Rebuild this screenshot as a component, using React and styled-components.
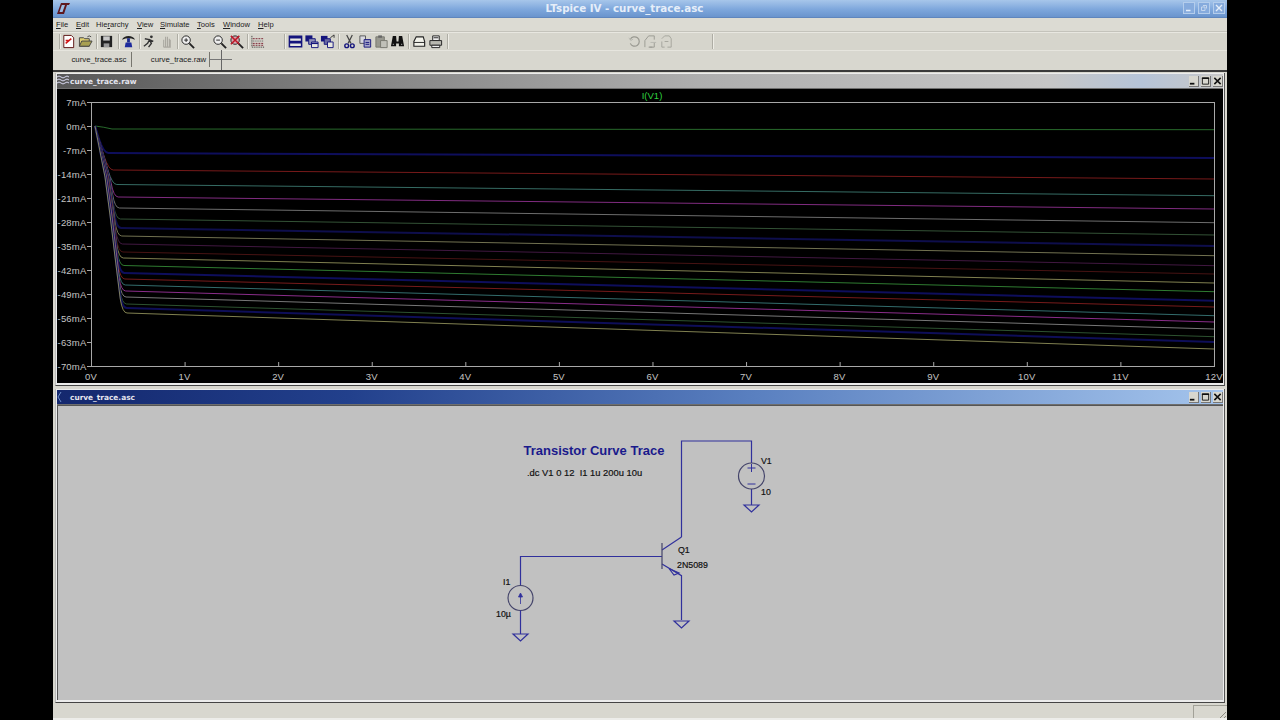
import React from "react";
import styled, { createGlobalStyle } from "styled-components";

const GlobalStyle = createGlobalStyle`
  html, body {
    margin: 0;
    background: #000;
    overflow: hidden;
  }
  * { box-sizing: border-box; }
`;

const UI_FONT = `"Liberation Sans", Arial, sans-serif`;

// [y at the knee of the curve, y at 12V, colour]
const TRACES = [
  [129, 129.7, "#2f7d34"],
  [153, 158, "#0e0e5c"],
  [170, 179, "#8c1f1f"],
  [184.5, 195.7, "#3f7f76"],
  [197, 209, "#973497"],
  [208, 222.7, "#808080"],
  [219, 235, "#3c6040"],
  [228, 246, "#0e0e4c"],
  [236, 255.7, "#85855e"],
  [244, 265.7, "#4c1c4c"],
  [252, 274, "#541616"],
  [258, 283, "#96965e"],
  [265.5, 291.7, "#37903a"],
  [273, 300.7, "#0e0e5c"],
  [279, 307, "#8c2020"],
  [285, 315.7, "#3c8080"],
  [291, 322, "#a235a2"],
  [297, 329, "#8c8c8c"],
  [304, 336.7, "#356038"],
  [308, 342, "#0e0e58"],
  [313, 349, "#97975e"],
];

const RAMP = [
  [126, 95],
  [177, 105],
  [215, 110],
  [265, 116],
  [313, 122],
];

const rampX = (y, i) => {
  const spread = (20 - i) * 0.35 * Math.min(1, Math.max(0, (y - 126) / 60));
  for (let n = 1; n < RAMP.length; n++) {
    const [y0, x0] = RAMP[n - 1];
    const [y1, x1] = RAMP[n];
    if (y <= y1) return x0 + ((y - y0) / (y1 - y0)) * (x1 - x0) + spread;
  }
  return 122 + spread;
};

const tracePath = ([knee, end], i) => {
  if (knee < 135) return `M95 126 Q104 127 112 ${knee} L1214 ${end}`;
  const bend = knee - 14;
  const ramp = RAMP.filter(([y]) => y < bend).map(([y]) => `${rampX(y, i)} ${y}`);
  const kx = rampX(knee, i);
  return `M${ramp.join(" L")} L${rampX(bend, i)} ${bend} Q${kx + 0.5} ${knee} ${kx + 5} ${knee} L1214 ${end}`;
};

const Y_LABELS = ["7mA", "0mA", "-7mA", "-14mA", "-21mA", "-28mA", "-35mA", "-42mA", "-49mA", "-56mA", "-63mA", "-70mA"];
const X_LABELS = ["0V", "1V", "2V", "3V", "4V", "5V", "6V", "7V", "8V", "9V", "10V", "11V", "12V"];

function TracePlot() {
  return (
    <PlotSvg viewBox="57 89 1166 294">
      <rect x="91.5" y="102.5" width="1123" height="264" fill="none" stroke="#a8a8a8" />
      {Y_LABELS.map((label, i) => {
        const y = 102.5 + i * 24;
        return (
          <g key={label}>
            <line x1="87" x2="91" y1={y} y2={y} stroke="#a8a8a8" />
            <AxisText x="86.5" y={y + 3} textAnchor="end">{label}</AxisText>
          </g>
        );
      })}
      {X_LABELS.map((label, i) => {
        const x = 91.5 + i * 93.58;
        return (
          <g key={label}>
            <line x1={x} x2={x} y1="362" y2="367" stroke="#a8a8a8" />
            <AxisText x={x - 0.5} y="379.5" textAnchor="middle">{label}</AxisText>
          </g>
        );
      })}
      {TRACES.map((t, i) => (
        <path
          key={i}
          d={tracePath(t, i)}
          fill="none"
          stroke={t[2]}
          strokeOpacity={i % 6 === 1 ? 1 : 0.85}
          strokeWidth={i % 6 === 1 ? 2 : 1}
        />
      ))}
      <TraceName x="652" y="98.5" textAnchor="middle">I(V1)</TraceName>
    </PlotSvg>
  );
}

function Schematic() {
  return (
    <SchematicSvg viewBox="58 406 1165 294">
      <g fill="none" stroke="#30309c" strokeWidth="1.2">
        <path d="M681.5 537V441H751.5V463" />
        <path d="M751.5 489V505" />
        <path d="M744 505H759L751.5 512Z" />
        <circle cx="751.5" cy="476" r="13" stroke="#44446a" />
        <path d="M662 556.5H520.5V585" />
        <circle cx="520.5" cy="598" r="12.5" stroke="#44446a" />
        <path d="M520.5 610.5V634" />
        <path d="M513 634H528L520.5 641Z" />
        <path d="M681.5 537L662 550" />
        <path d="M662 564L681.5 575.7V620" />
        <path d="M669 568.5L674 575L679 573Z" />
        <path d="M674 621H689L681.5 628Z" />
      </g>
      <path d="M662 543V569" stroke="#44446a" strokeWidth="1.2" />
      <path d="M747.5 468H755.5M751.5 464V472M747.5 484H755.5" stroke="#30309c" fill="none" />
      <path d="M520.5 594V604M518.5 597L520.5 593L522.5 597Z" stroke="#30309c" fill="#30309c" strokeWidth="0.8" />
      <HeadingText x="523.5" y="455">Transistor Curve Trace</HeadingText>
      <NetText x="527" y="476" xmlSpace="preserve" $size={9.4}>.dc V1 0 12  I1 1u 200u 10u</NetText>
      <NetText x="761" y="463.5">V1</NetText>
      <NetText x="761" y="495">10</NetText>
      <NetText x="678" y="553">Q1</NetText>
      <NetText x="677" y="568">2N5089</NetText>
      <NetText x="503" y="585">I1</NetText>
      <NetText x="496" y="617">10µ</NetText>
    </SchematicSvg>
  );
}

const Icon = ({ children }) => (
  <svg width="15" height="15" viewBox="0 0 16 16" fill="none">{children}</svg>
);

const ICONS = {
  newSch: <Icon><path d="M3 1.5H11L13.5 4V14.5H3Z" fill="#fff" stroke="#5a1010" /><path d="M5 10L11 5M5 7H8" stroke="#d01818" strokeWidth="1.6" /></Icon>,
  open: <Icon><path d="M1.5 4H6L7 5H12V13H1.5Z" fill="#e0d070" stroke="#444" /><path d="M1.5 13L4 7.5H15L12 13Z" fill="#a8a050" stroke="#444" /><path d="M10 3Q12 1 14 3" stroke="#444" /></Icon>,
  save: <Icon><path d="M2 2H14V14H2Z" fill="#222" /><path d="M4.5 2.5H11.5V7H4.5Z" fill="#c8c8c8" /><path d="M5 10H11V14H5Z" fill="#999" /></Icon>,
  control: <Icon><path d="M1 6Q3 2 8 2Q13 2 15 6Q11 4.500 8 4.500Q5 4.500 1 6Z" fill="#222" /><path d="M6.500 4.500H9.500V9H6.500Z" fill="#1c2a8c" /><path d="M5 9H11L12 14H4Z" fill="#1c2a9c" /></Icon>,
  run: <Icon><circle cx="10" cy="3" r="1.500" fill="#333" /><path d="M2 13L6 10L8 6L12 8M8 6L10 10L7 14M8 6L3 5" stroke="#333" strokeWidth="1.500" /></Icon>,
  halt: <Icon><path d="M5 14V6M7 14V3M9 14V3M11 14V5M5 14H12V6" stroke="#aaa8a0" strokeWidth="1.200" /></Icon>,
  zoomIn: <Icon><circle cx="6.500" cy="6.500" r="4.500" stroke="#222" fill="#eee" /><path d="M10 10L15 15" stroke="#222" strokeWidth="2" /><path d="M4.500 6.500H8.500M6.500 4.500V8.500" stroke="#222" /></Icon>,
  zoomOut: <Icon><circle cx="6.500" cy="6.500" r="4.500" stroke="#222" fill="#eee" /><path d="M10 10L15 15" stroke="#222" strokeWidth="2" /><path d="M4.500 6.500H8.500" stroke="#222" /></Icon>,
  zoomCancel: <Icon><circle cx="6.500" cy="6.500" r="4.500" stroke="#222" fill="#d8a8b0" /><path d="M10 10L15 15" stroke="#222" strokeWidth="2" /><path d="M2 2L11 11M11 2L2 11" stroke="#c01828" strokeWidth="1.600" /></Icon>,
  grid: <Icon><path d="M2 2V14H15" stroke="#222" strokeDasharray="1 1" /><path d="M3 5H14M3 10H14M3 12H14" stroke="#7a2030" strokeDasharray="2 1" /><path d="M3 7.500H14" stroke="#555" strokeDasharray="1 1" /></Icon>,
  tile: <Icon><path d="M1.500 2.500H14.500V13.500H1.500Z" fill="#e8e8e0" stroke="#14147c" strokeWidth="1.600" /><path d="M1.500 4H14.500M1.500 8H14.500M1.500 9.500H14.500" stroke="#14147c" strokeWidth="1.400" /></Icon>,
  cascade: <Icon><path d="M1.500 1.500H9V8H1.500Z" fill="#14147c" /><path d="M5 5H12V11H5Z" fill="#9090b8" stroke="#14147c" /><path d="M8 8.500H15V14.500H8Z" fill="#e8e8e0" stroke="#14147c" /><path d="M8 10H15" stroke="#14147c" strokeWidth="1.500" /></Icon>,
  arrange: <Icon><path d="M1 2H8V8H1Z" fill="#14147c" /><path d="M4.500 5H11V11H4.500Z" fill="#6868a0" stroke="#14147c" /><path d="M8 8.500H14V14.500H8Z" fill="#e8e8e0" stroke="#14147c" /><path d="M15 1L11 4M15 1V4" stroke="#333" /></Icon>,
  cut: <Icon><path d="M5 1L9.500 10M11 1L6.500 10" stroke="#444" strokeWidth="1.300" /><circle cx="5" cy="12.500" r="2" stroke="#14147c" strokeWidth="1.500" /><circle cx="11" cy="12.500" r="2" stroke="#14147c" strokeWidth="1.500" /></Icon>,
  copy: <Icon><path d="M2 2H8V10H2Z" fill="#d8d8e0" stroke="#555" /><path d="M6.500 6H13.500V14H6.500Z" fill="#a8a8c8" stroke="#14147c" /><path d="M8 9H12M8 11H12" stroke="#14147c" /></Icon>,
  paste: <Icon><path d="M2 3H11V14H2Z" fill="#98988f" stroke="#77776f" /><path d="M4.500 1.500H8.500V4H4.500Z" fill="#666" /><path d="M7 7H14V14.500H7Z" fill="#c0c0b8" stroke="#77776f" /></Icon>,
  find: <Icon><path d="M3 2H6.500L7 8H9L9.500 2H13L15 13H9.500V10H6.500V13H1Z" fill="#111" /><path d="M3 11H4M12 11H13" stroke="#ddd" /></Icon>,
  preview: <Icon><path d="M4.500 3H12L13.500 8V13H2V8Z" fill="#f2f2ea" stroke="#222" strokeWidth="1.200" /><path d="M2 9H13.500" stroke="#222" /></Icon>,
  print: <Icon><path d="M5 2H12V7H5Z" fill="#eee" stroke="#222" /><path d="M2 7H14.500V12H2Z" fill="#b8b8b0" stroke="#222" /><path d="M4 12H12.500V14.500H4Z" fill="#eee" stroke="#222" /><path d="M6 4H11" stroke="#222" /></Icon>,
  undo: <Icon><path d="M3.500 6A5 5 0 1 1 3.500 10" stroke="#9a9a92" strokeWidth="1.300" /><path d="M2 4L4 7L6.500 5.500" stroke="#b8b8b0" /></Icon>,
  rot: <Icon><path d="M2 14V7L6 2H12V6M6 14H10M12 9V14H7" stroke="#9a9a92" /><path d="M8 9H14" stroke="#b8b8b0" /></Icon>,
  mirror: <Icon><path d="M3 5L6 2H11L13 5V14H9M3 8V14H6M6 8H10" stroke="#a4a49c" /></Icon>,
};

function ToolSlot({ name, w }) {
  return <Slot $w={w}>{ICONS[name]}</Slot>;
}

function Toolbar() {
  return (
    <ToolRow>
      <Sep $w={7} $at="left" />
      <ToolSlot name="newSch" />
      <ToolSlot name="open" />
      <Sep $w={4} />
      <ToolSlot name="save" />
      <Sep $w={5} />
      <ToolSlot name="control" />
      <Sep $w={4} />
      <ToolSlot name="run" />
      <ToolSlot name="halt" />
      <Sep $w={4} />
      <ToolSlot name="zoomIn" />
      <Slot $w={15} />
      <ToolSlot name="zoomOut" />
      <ToolSlot name="zoomCancel" />
      <Sep $w={4} />
      <ToolSlot name="grid" />
      <Slot $w={15} />
      <Sep $w={6} />
      <ToolSlot name="tile" w={16} />
      <ToolSlot name="cascade" w={16} />
      <ToolSlot name="arrange" w={16} />
      <Sep $w={6} />
      <ToolSlot name="cut" w={16} />
      <ToolSlot name="copy" w={16} />
      <ToolSlot name="paste" w={16} />
      <ToolSlot name="find" w={16} />
      <Sep $w={6} />
      <ToolSlot name="preview" w={16} />
      <ToolSlot name="print" w={16} />
      <Sep $w={8} />
      <Slot $w={175} />
      <ToolSlot name="undo" w={16} />
      <ToolSlot name="rot" w={16} />
      <ToolSlot name="mirror" w={16} />
      <Slot $w={37} />
      <Sep $w={1} />
    </ToolRow>
  );
}

function WindowButtons() {
  return (
    <ChildButtons>
      <ChildButton>
        <svg width="10" height="10" viewBox="0 0 10 10"><path d="M1 8H6" stroke="#111" strokeWidth="2" /></svg>
      </ChildButton>
      <ChildButton>
        <svg width="10" height="10" viewBox="0 0 10 10"><path d="M1.500 1.500H8.500V8.500H1.500Z" fill="none" stroke="#111" /><path d="M1 2H9" stroke="#111" strokeWidth="1.500" /></svg>
      </ChildButton>
      <ChildButton>
        <svg width="10" height="10" viewBox="0 0 10 10"><path d="M1.500 1.500L8.500 8.500M8.500 1.500L1.500 8.500" stroke="#111" strokeWidth="1.700" /></svg>
      </ChildButton>
    </ChildButtons>
  );
}

export default function App() {
  return (
    <>
      <GlobalStyle />
      <Frame>
        <TitleBar>
          <svg width="14" height="13" viewBox="0 0 14 13">
            <path d="M5 1H14L13 3H11L8 12H1Z" fill="#5e1820" />
            <path d="M5.800 3H9L6.500 10H3.500Z" fill="#9cbde4" />
          </svg>
          <AppTitle>LTspice IV - curve_trace.asc</AppTitle>
          <TitleButtons>
            <TitleButton>
              <svg width="8" height="8" viewBox="0 0 8 8"><path d="M1 6.500H5.500" stroke="#e4eefa" strokeWidth="1.500" /></svg>
            </TitleButton>
            <TitleButton>
              <svg width="8" height="8" viewBox="0 0 8 8"><path d="M1.500 3H5V6.500H1.500ZM3 1.500H6.500V4.500" fill="none" stroke="#c4d6ee" /></svg>
            </TitleButton>
            <TitleButton>
              <svg width="8" height="8" viewBox="0 0 8 8"><path d="M1 1L7 7M7 1L1 7" stroke="#e4eefa" strokeWidth="1.400" /></svg>
            </TitleButton>
          </TitleButtons>
        </TitleBar>

        <MenuBar>
          <MenuItem $w={20}><u>F</u>ile</MenuItem>
          <MenuItem $w={20}><u>E</u>dit</MenuItem>
          <MenuItem $w={41}>Hie<u>r</u>archy</MenuItem>
          <MenuItem $w={23}><u>V</u>iew</MenuItem>
          <MenuItem $w={37}><u>S</u>imulate</MenuItem>
          <MenuItem $w={26}><u>T</u>ools</MenuItem>
          <MenuItem $w={35}><u>W</u>indow</MenuItem>
          <MenuItem $w={20}><u>H</u>elp</MenuItem>
        </MenuBar>

        <Toolbar />

        <TabRow>
          <Tab $w={79} $pad={14}>curve_trace.asc</Tab>
          <Tab $w={78} $pad={16}>curve_trace.raw</Tab>
          <CrossCursor />
        </TabRow>

        <MdiArea>
          <ChildWindow $h={313}>
            <ChildTitle $active={false}>
              <svg width="12" height="12" viewBox="0 0 12 12">
                <path d="M0 2Q2 0 4 2T8 2T12 2M0 5Q2 3 4 5T8 5T12 5M0 8Q2 6 4 8T8 8T12 8" fill="none" stroke="#d8d8f0" />
              </svg>
              <ChildName>curve_trace.raw</ChildName>
              <WindowButtons />
            </ChildTitle>
            <PlotBody>
              <TracePlot />
            </PlotBody>
          </ChildWindow>
          <ChildWindow $h={314}>
            <ChildTitle $active>
              <svg width="12" height="12" viewBox="0 0 12 12">
                <path d="M4 1L1 6L4 11" fill="none" stroke="#6f8ec8" />
              </svg>
              <ChildName>curve_trace.asc</ChildName>
              <WindowButtons />
            </ChildTitle>
            <SchematicBody>
              <Schematic />
            </SchematicBody>
          </ChildWindow>
        </MdiArea>

        <StatusBar>
          <StatusBox />
          <Grip />
        </StatusBar>
      </Frame>
    </>
  );
}

const Frame = styled.div`
  width: 1174px;
  height: 720px;
  margin-left: 53px;
  display: flex;
  flex-direction: column;
  background: #d8d7cf;
  font-family: ${UI_FONT};
  overflow: hidden;
`;

const TitleBar = styled.div`
  height: 18px;
  flex: none;
  display: flex;
  align-items: center;
  padding: 0 2px 1px 3px;
  background: linear-gradient(180deg, #a7c6ea 0%, #7ea7dc 55%, #6a94cd 100%);
  border-bottom: 1px solid #5f86bd;
`;

const AppTitle = styled.div`
  flex: 1;
  padding-right: 4px;
  text-align: center;
  color: #e6eef9;
  font: bold 10.3px "DejaVu Sans", sans-serif;
`;

const TitleButtons = styled.div`
  display: flex;
  gap: 3px;
`;

const TitleButton = styled.div`
  width: 12px;
  height: 12px;
  display: flex;
  align-items: center;
  justify-content: center;
  background: #86abdd;
  border: 1px solid #b4cdec;
`;

const MenuBar = styled.div`
  height: 14px;
  flex: none;
  display: flex;
  align-items: center;
  padding-left: 3px;
  background: #dcdbd3;
  border-bottom: 1px solid #c4c3bb;
`;

const MenuItem = styled.span`
  width: ${(p) => p.$w}px;
  flex: none;
  font-size: 7.6px;
  color: #222;
  line-height: 14px;
  white-space: nowrap;
  u { text-decoration-thickness: 1px; }
`;

const ToolRow = styled.div`
  height: 18px;
  flex: none;
  display: flex;
  align-items: center;
  background: #d6d5cc;
  border-top: 1px solid #e8e7e0;
`;

const Slot = styled.div`
  width: ${(p) => p.$w ?? 17}px;
  height: 16px;
  flex: none;
  display: flex;
  align-items: center;
  justify-content: center;
`;

const Sep = styled.div`
  width: ${(p) => p.$w}px;
  height: 15px;
  flex: none;
  position: relative;
  &::after {
    content: "";
    position: absolute;
    top: 0;
    bottom: 0;
    left: ${(p) => (p.$at === "left" ? "6px" : "50%")};
    width: 1px;
    background: #aeada4;
    box-shadow: 1px 0 0 #eeede6;
  }
`;

const TabRow = styled.div`
  height: 22px;
  flex: none;
  position: relative;
  display: flex;
  background: #d8d7cf;
  border-bottom: 2px solid #3a3a3a;
  box-shadow: inset 0 1px 0 #e6e5de;
`;

const Tab = styled.div`
  width: ${(p) => p.$w}px;
  height: 15px;
  margin-top: 2px;
  display: flex;
  align-items: center;
  justify-content: center;
  padding-left: ${(p) => p.$pad}px;
  font-size: 7.8px;
  color: #222;
  border-right: 1px solid #77766f;
`;

const CrossCursor = styled.div`
  position: absolute;
  left: 157px;
  top: 0;
  width: 22px;
  height: 20px;
  &::before {
    content: "";
    position: absolute;
    left: 0;
    right: 0;
    top: 9px;
    height: 1px;
    background: #777;
  }
  &::after {
    content: "";
    position: absolute;
    left: 11px;
    top: 0;
    bottom: 0;
    width: 1px;
    background: #666;
  }
`;

const MdiArea = styled.div`
  flex: 1;
  min-height: 0;
  display: flex;
  flex-direction: column;
  gap: 3px;
  padding: 1px 2px 0;
  background: #d8d7cf;
`;

const ChildWindow = styled.div`
  height: ${(p) => p.$h}px;
  flex: none;
  display: flex;
  flex-direction: column;
  padding: 1px 1px 2px;
  background: #ececec;
  border-bottom: 1px solid #444;
  border-right: 1px solid #555;
  border-left: 1px solid #bbb;
`;

const ChildTitle = styled.div`
  height: 15px;
  flex: none;
  display: flex;
  align-items: center;
  gap: 1px;
  border-bottom: 1px solid #6e6e6e;
  background: ${(p) =>
    p.$active
      ? "linear-gradient(90deg, #14286e 0%, #22408c 25%, #5a80c0 60%, #a4c4ec 100%)"
      : "linear-gradient(90deg, #585858 0%, #8a8a8a 30%, #aeaeae 55%, #c6c6c6 85%, #b6c4d8 93%, #c8c8c8 100%)"};
`;

const ChildName = styled.span`
  flex: 1;
  color: #e4e4ee;
  font: bold 7.4px "DejaVu Sans", sans-serif;
`;

const ChildButtons = styled.div`
  display: flex;
  gap: 2px;
`;

const ChildButton = styled.div`
  width: 10px;
  height: 11px;
  display: flex;
  align-items: center;
  justify-content: center;
  background: #d8d7cf;
  border-right: 1px solid #777;
  border-bottom: 1px solid #777;
`;

const PlotBody = styled.div`
  flex: 1;
  min-height: 0;
  background: #000;
`;

const SchematicBody = styled.div`
  flex: 1;
  min-height: 0;
  background: #c1c1c1;
  border-top: 1px solid #555;
  border-left: 1px solid #555;
`;

const PlotSvg = styled.svg`
  display: block;
  width: 100%;
  height: 100%;
`;

const SchematicSvg = styled.svg`
  display: block;
  width: 100%;
  height: 100%;
`;

const AxisText = styled.text`
  fill: #c4c4c4;
  font-size: 9.5px;
  font-family: ${UI_FONT};
  letter-spacing: 0.2px;
`;

const TraceName = styled.text`
  fill: #2fd040;
  font-size: 9.5px;
  font-family: ${UI_FONT};
`;

const HeadingText = styled.text`
  fill: #1a1a8c;
  font-size: 13px;
  font-weight: bold;
  font-family: ${UI_FONT};
`;

const NetText = styled.text`
  fill: #111;
  stroke: #111;
  stroke-width: 0.2px;
  font-size: ${(p) => p.$size ?? 8.8}px;
  font-family: ${UI_FONT};
  white-space: pre;
`;

const StatusBar = styled.div`
  height: 17px;
  flex: none;
  display: flex;
  justify-content: flex-end;
  position: relative;
  background: #d8d7cf;
  border-bottom: 2px solid #ededea;
`;

const StatusBox = styled.div`
  width: 34px;
  height: 13px;
  margin-top: 2px;
  border-left: 1px solid #a2a198;
  border-top: 1px solid #a2a198;
`;

const Grip = styled.div`
  position: absolute;
  right: 1px;
  bottom: 0;
  width: 9px;
  height: 9px;
  background: repeating-linear-gradient(135deg, transparent 0 2px, #8a8980 2px 3px);
  clip-path: polygon(100% 0, 100% 100%, 0 100%);
`;
